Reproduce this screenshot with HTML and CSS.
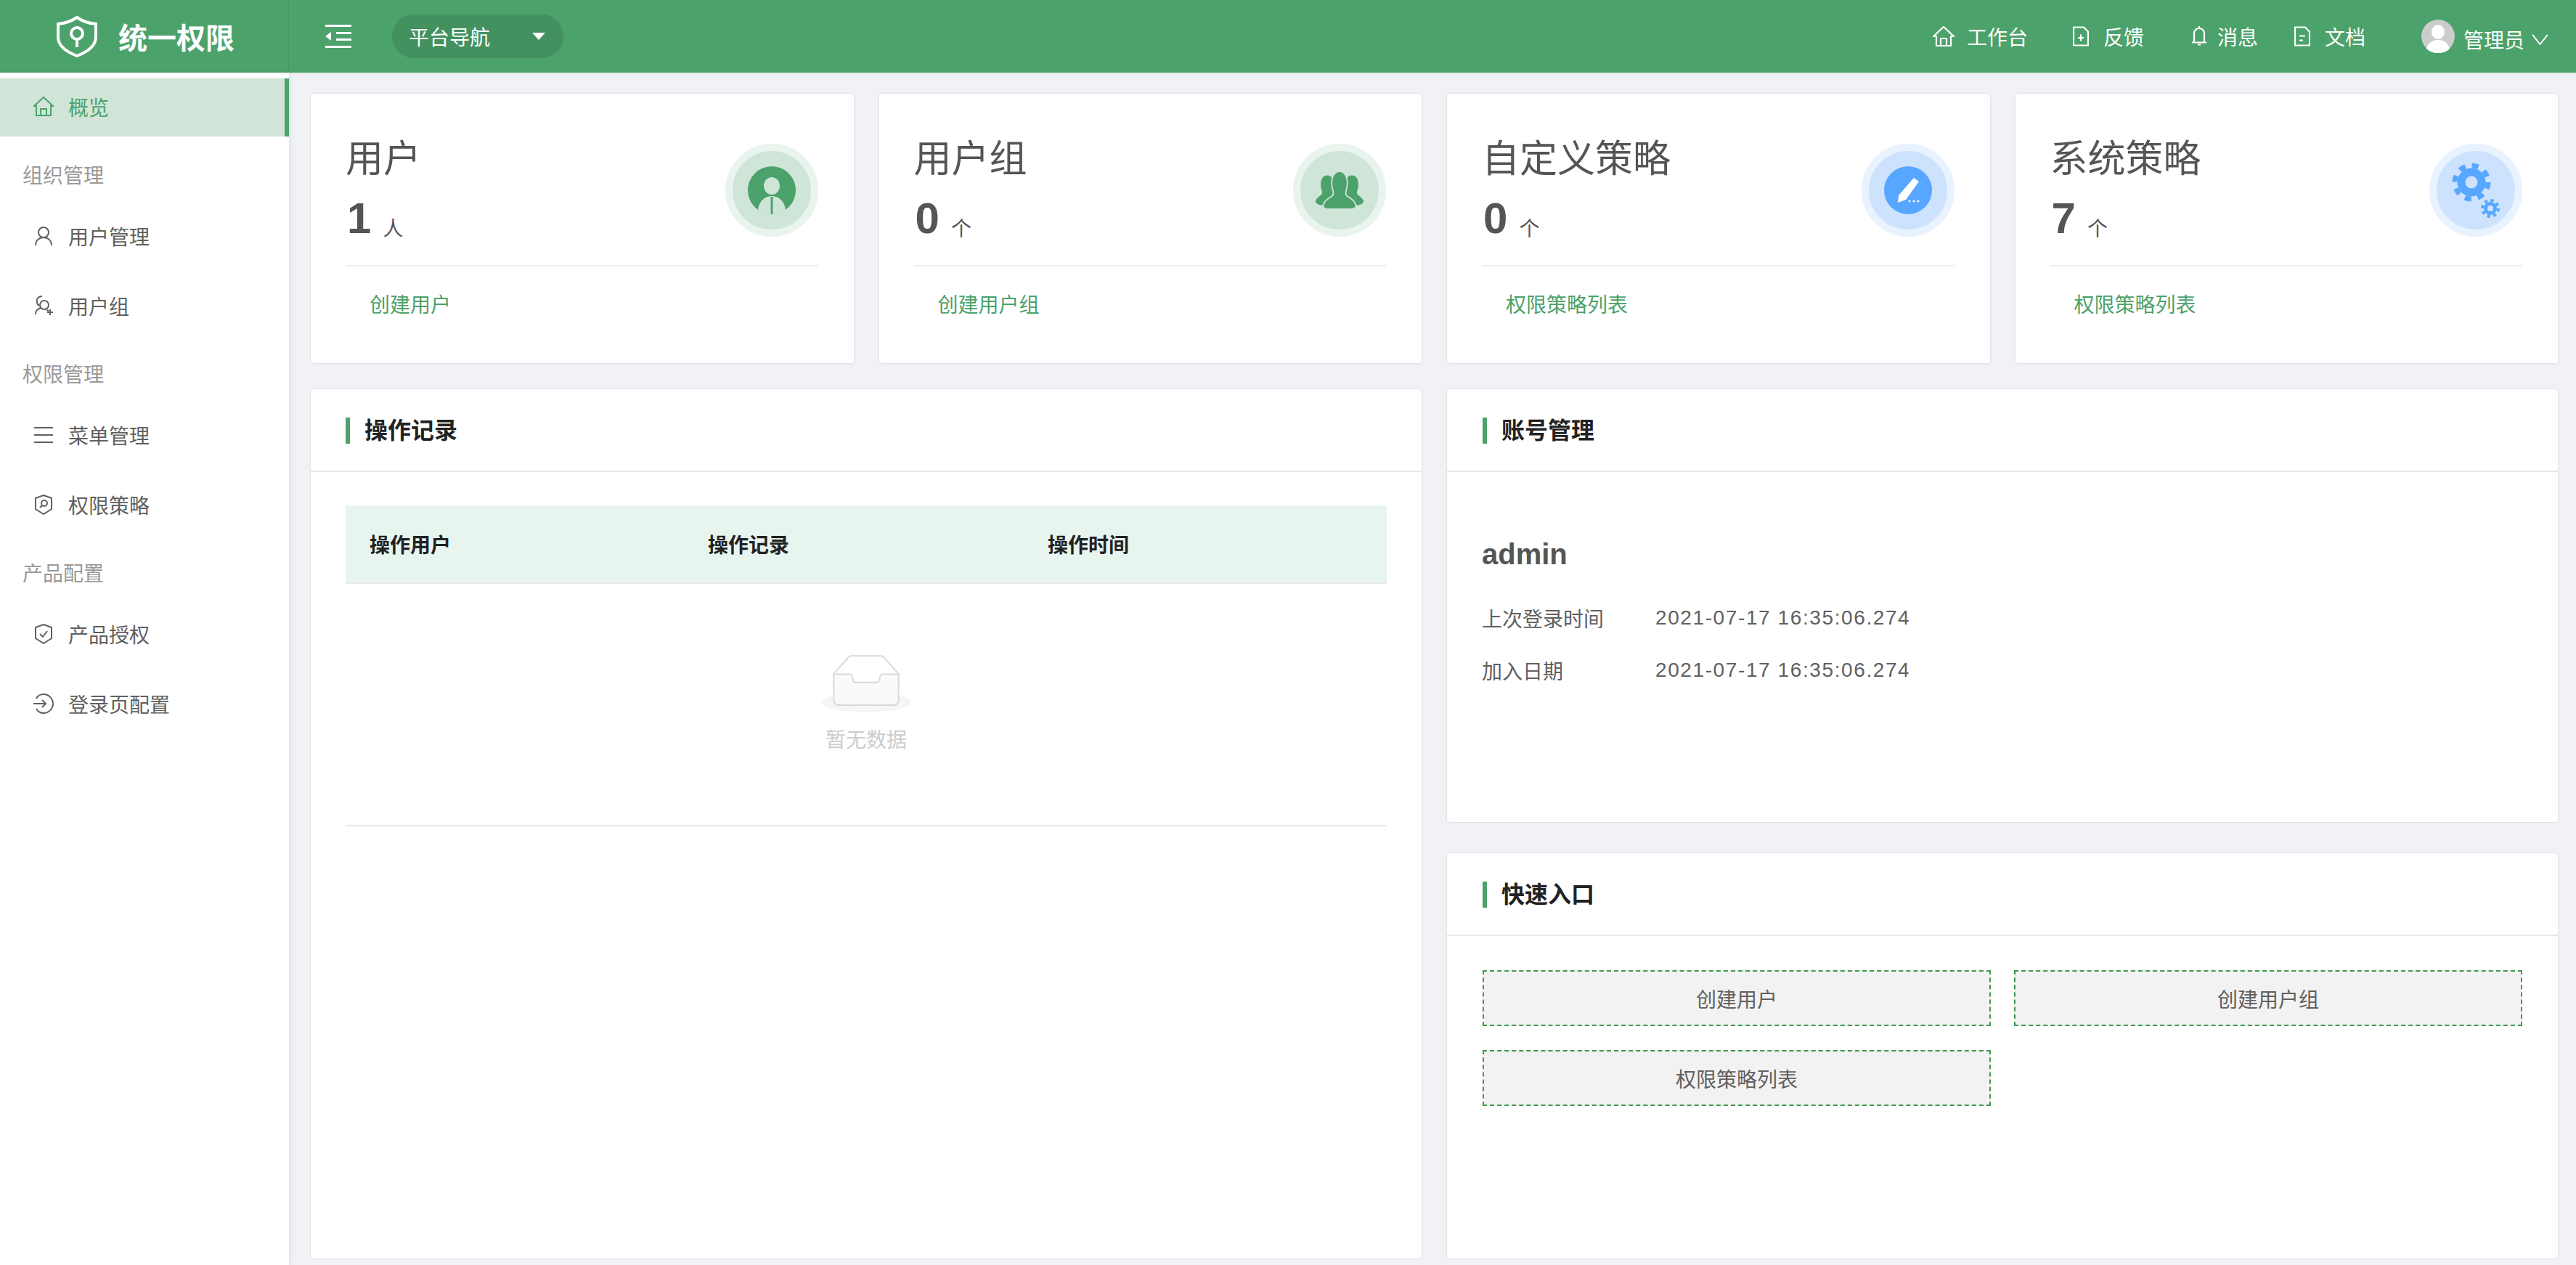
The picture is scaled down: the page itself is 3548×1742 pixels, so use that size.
FILE: index.html
```html
<!DOCTYPE html>
<html lang="zh-CN">
<head>
    <meta charset="UTF-8">
    <title>统一权限</title>
    <link rel="stylesheet" href="styles.css">
</head>
<body>

    <header class="topbar">
        <div class="brand">
            <svg class="brand-icon" viewBox="0 0 56 58" fill="none" stroke="#fff" stroke-width="4">
                <path d="M28 3C35 8 44 11 54 12V30C54 43 41 51 28 56C15 51 2 43 2 30V12C12 11 21 8 28 3Z"/>
                <circle cx="28" cy="25" r="8"/>
                <path d="M28 33V44"/>
            </svg>
            <span class="brand-name">统一权限</span>
        </div>
        <svg class="collapse-icon" viewBox="0 0 36 32" fill="#fff">
            <rect x="0" y="0" width="36" height="3"/>
            <rect x="15" y="10" width="21" height="3"/>
            <rect x="15" y="19" width="21" height="3"/>
            <rect x="0" y="29" width="36" height="3"/>
            <path d="M8 10V22L0 16Z"/>
        </svg>
        <div class="platform">
            <span>平台导航</span>
            <i class="caret"></i>
        </div>
        <nav class="top-links">
            <a class="top-link link-home">
                <svg class="home-icon" viewBox="0 0 30 28" fill="none" stroke="#fff" stroke-width="2.2"><path d="M1 14L15 1L29 14H25V27H5V14Z"/><path d="M11 27V17H19V27"/></svg>
                工作台
            </a>
            <a class="top-link link-feedback">
                <svg class="doc-icon" viewBox="0 0 22 27" fill="none" stroke="#fff" stroke-width="2.2"><path d="M1 1H15L21 7V26H1Z"/><path d="M11 11V20M7 15.500H15"/></svg>
                反馈
            </a>
            <a class="top-link link-message">
                <svg class="doc-icon" viewBox="0 0 22 28" fill="none" stroke="#fff" stroke-width="2.2"><path d="M4 22V10C4 6 7 3 11 3C15 3 18 6 18 10V22M1 22.500H21M9 25.500H13M11 0V3"/></svg>
                消息
            </a>
            <a class="top-link link-doc">
                <svg class="doc-icon" viewBox="0 0 22 27" fill="none" stroke="#fff" stroke-width="2.2"><path d="M1 1H15L21 7V26H1Z"/><path d="M7 13H15M7 19H12"/></svg>
                文档
            </a>
            <a class="top-user">
                <svg class="avatar" viewBox="0 0 46 46">
                    <circle cx="23" cy="23" r="23" fill="#ccc"/>
                    <ellipse cx="23" cy="17" rx="9" ry="10" fill="#fff"/>
                    <path d="M7 40C9 32 15 28 23 28C31 28 37 32 39 40C35 44 29 46 23 46C17 46 11 44 7 40Z" fill="#fff"/>
                </svg>
                <span>管理员</span>
                <svg class="chevron" viewBox="0 0 24 16" fill="none" stroke="#fff" stroke-width="2"><path d="M1 1L12 15L23 1"/></svg>
            </a>
        </nav>
    </header>

    <div class="layout">
        <aside class="sidebar">
            <a class="menu-item active">
                <svg class="menu-icon" viewBox="0 0 28 28" fill="none" stroke="currentColor" stroke-width="2"><path d="M1 13L14 1L27 13H24V26H4V13Z"/><path d="M10 26V17H18V26"/></svg>
                概览
            </a>
            <div class="menu-group">组织管理</div>
            <a class="menu-item">
                <svg class="menu-icon" viewBox="0 0 28 28" fill="none" stroke="currentColor" stroke-width="2"><circle cx="14" cy="9" r="7"/><path d="M3 27C3 20 8 16 14 16C20 16 25 20 25 27"/></svg>
                用户管理
            </a>
            <a class="menu-item">
                <svg class="menu-icon" viewBox="0 0 28 28" fill="none" stroke="currentColor" stroke-width="2"><circle cx="15" cy="13" r="6"/><path d="M3 26C3 21 5 19 10 17M12 1C7 1 4 4 5 9C5 11 6 13 8 14M18 20L21 21M23 19V27M19 23H27"/></svg>
                用户组
            </a>
            <div class="menu-group">权限管理</div>
            <a class="menu-item">
                <svg class="menu-icon" viewBox="0 0 28 28" fill="currentColor"><rect x="1" y="3" width="26" height="2"/><rect x="1" y="13" width="26" height="2"/><rect x="1" y="23" width="26" height="2"/></svg>
                菜单管理
            </a>
            <a class="menu-item">
                <svg class="menu-icon" viewBox="0 0 28 28" fill="none" stroke="currentColor" stroke-width="2"><path d="M14 1L25 5V20L14 27L3 20V5Z"/><circle cx="15" cy="12" r="4"/><path d="M12 15L9 18"/></svg>
                权限策略
            </a>
            <div class="menu-group">产品配置</div>
            <a class="menu-item">
                <svg class="menu-icon" viewBox="0 0 28 28" fill="none" stroke="currentColor" stroke-width="2"><path d="M14 1L25 5V20L14 27L3 20V5Z"/><path d="M9 14L13 18L19 10"/></svg>
                产品授权
            </a>
            <a class="menu-item">
                <svg class="menu-icon" viewBox="0 0 28 28" fill="none" stroke="currentColor" stroke-width="2"><path d="M4 7C6 3 10 1 14 1C21 1 27 7 27 14C27 21 21 27 14 27C10 27 6 25 4 21"/><path d="M0 14H17M12 9L17 14L12 19"/></svg>
                登录页配置
            </a>
        </aside>

        <main class="content">
            <section class="stats">
                <div class="card stat">
                    <div class="stat-top">
                        <div>
                            <div class="stat-title">用户</div>
                            <div class="stat-num"><b>1</b><span>人</span></div>
                        </div>
                        <div class="badge badge-green">
                            <svg class="badge-icon" viewBox="0 0 66 66">
                                <circle cx="33" cy="33" r="33" fill="#4ca26b"/>
                                <ellipse cx="33" cy="27" rx="11" ry="12" fill="#cfe5d7"/>
                                <path d="M14 60C15 50 22 41 33 41C44 41 51 50 52 60C47 64 40 66 33 66C26 66 19 64 14 60Z" fill="#cfe5d7"/>
                                <path d="M31.500 42H34.500V66H31.500Z" fill="#4ca26b"/>
                            </svg>
                        </div>
                    </div>
                    <a class="stat-link">创建用户</a>
                </div>
                <div class="card stat">
                    <div class="stat-top">
                        <div>
                            <div class="stat-title">用户组</div>
                            <div class="stat-num"><b>0</b><span>个</span></div>
                        </div>
                        <div class="badge badge-green">
                            <svg class="badge-icon" viewBox="0 0 74 58" fill="#4ca26b">
                                <path d="M18 6C26 6 28 14 28 22C28 30 26 32 27 38L10 52C6 52 0 50 0 46C1 40 8 38 10 34C11 31 8 28 8 20C8 12 11 6 18 6Z"/>
                                <path d="M56 6C48 6 46 14 46 22C46 30 48 32 47 38L64 52C68 52 74 50 74 46C73 40 66 38 64 34C63 31 66 28 66 20C66 12 63 6 56 6Z"/>
                                <path d="M37 0C45 0 49 8 49 18C49 28 45 32 47 36C50 41 60 42 62 52C63 56 60 58 56 58H18C14 58 11 56 12 52C14 42 24 41 27 36C29 32 25 28 25 18C25 8 29 0 37 0Z" stroke="#cfe5d7" stroke-width="2"/>
                            </svg>
                        </div>
                    </div>
                    <a class="stat-link">创建用户组</a>
                </div>
                <div class="card stat">
                    <div class="stat-top">
                        <div>
                            <div class="stat-title">自定义策略</div>
                            <div class="stat-num"><b>0</b><span>个</span></div>
                        </div>
                        <div class="badge badge-blue">
                            <svg class="badge-icon" viewBox="0 0 66 66">
                                <circle cx="33" cy="33" r="33" fill="#57a6ff"/>
                                <path d="M41 16L48 21L30 46L19 50L20 40Z" fill="#fff"/>
                                <circle cx="35" cy="48" r="1.500" fill="#fff"/>
                                <circle cx="41" cy="48" r="1.500" fill="#fff"/>
                                <circle cx="47" cy="48" r="1.500" fill="#fff"/>
                            </svg>
                        </div>
                    </div>
                    <a class="stat-link">权限策略列表</a>
                </div>
                <div class="card stat">
                    <div class="stat-top">
                        <div>
                            <div class="stat-title">系统策略</div>
                            <div class="stat-num"><b>7</b><span>个</span></div>
                        </div>
                        <div class="badge badge-blue">
                            <svg class="badge-gears" viewBox="0 0 108 108" fill="none" stroke="#57a6ff">
                                <circle cx="48" cy="43" r="23" stroke-width="7" stroke-dasharray="9 9.060"/>
                                <circle cx="48" cy="43" r="14" stroke-width="11"/>
                                <circle cx="74" cy="79" r="11" stroke-width="4" stroke-dasharray="4.300 4.340"/>
                                <circle cx="74" cy="79" r="6.500" stroke-width="5"/>
                            </svg>
                        </div>
                    </div>
                    <a class="stat-link">权限策略列表</a>
                </div>
            </section>

            <section class="panels">
                <div class="card panel">
                    <h2 class="panel-title"><span>操作记录</span></h2>
                    <div class="log-body">
                        <div class="log-head">
                            <div>操作用户</div>
                            <div>操作记录</div>
                            <div>操作时间</div>
                        </div>
                        <div class="log-empty">
                            <svg class="empty-icon" viewBox="0 0 64 41">
                                <g transform="translate(0 1)" fill="none" fill-rule="evenodd">
                                    <ellipse fill="#f5f5f5" cx="32" cy="33" rx="32" ry="7"/>
                                    <g fill-rule="nonzero" stroke="#d9d9d9">
                                        <path d="M55 12.760L44.854 1.258C44.367.474 43.656 0 42.907 0H21.093c-.749 0-1.460.474-1.947 1.257L9 12.761V22h46v-9.240z"/>
                                        <path d="M41.613 15.931c0-1.605.994-2.930 2.227-2.931H55v18.137C55 33.260 53.680 35 52.050 35h-40.100C10.320 35 9 33.259 9 31.137V13h11.160c1.233 0 2.227 1.323 2.227 2.928v.022c0 1.605 1.005 2.901 2.237 2.901h14.752c1.232 0 2.237-1.308 2.237-2.913v-.007z" fill="#fafafa"/>
                                    </g>
                                </g>
                            </svg>
                            <div class="empty-text">暂无数据</div>
                        </div>
                    </div>
                </div>

                <div class="side-panels">
                    <div class="card panel account">
                        <h2 class="panel-title"><span>账号管理</span></h2>
                        <div class="account-body">
                            <div class="account-name">admin</div>
                            <div class="account-row"><label>上次登录时间</label><span>2021-07-17 16:35:06.274</span></div>
                            <div class="account-row"><label>加入日期</label><span>2021-07-17 16:35:06.274</span></div>
                        </div>
                    </div>
                    <div class="card panel quick">
                        <h2 class="panel-title"><span>快速入口</span></h2>
                        <div class="quick-grid">
                            <a class="quick-btn">创建用户</a>
                            <a class="quick-btn">创建用户组</a>
                            <a class="quick-btn">权限策略列表</a>
                        </div>
                    </div>
                </div>
            </section>
        </main>
    </div>

</body>
</html>
```

FILE: styles.css
```css
* {
    box-sizing: border-box;
}

body {
    margin: 0;
    height: 1742px;
    overflow: hidden;
    font-family: "Liberation Sans", "Noto Sans CJK SC", sans-serif;
    font-size: 28px;
    color: #606060;
    background-color: #f0f2f5;
}

/* top bar */
.topbar {
    display: flex;
    align-items: center;
    height: 100px;
    background-color: #4ca26b;
    color: #fff;
}

.brand {
    display: flex;
    align-items: center;
    width: 398px;
    height: 100%;
    padding-left: 78px;
    border-right: 1px solid #479a65;
    flex-shrink: 0;
}

.brand-icon {
    width: 56px;
    height: 58px;
}

.brand-name {
    margin-left: 29px;
    font-size: 40px;
    font-weight: 700;
}

.collapse-icon {
    width: 36px;
    height: 32px;
    margin-left: 50px;
}

.platform {
    display: flex;
    align-items: center;
    justify-content: space-between;
    width: 236px;
    height: 60px;
    margin-left: 56px;
    padding: 0 25px 0 23px;
    border-radius: 30px;
    background-color: #43915f;
}

.caret {
    width: 0;
    height: 0;
    border-left: 9px solid transparent;
    border-right: 9px solid transparent;
    border-top: 10px solid #fff;
}

.top-links {
    display: flex;
    align-items: center;
    margin-left: auto;
    margin-right: 38px;
}

.top-link {
    display: flex;
    align-items: center;
}

.home-icon {
    width: 30px;
    height: 28px;
    margin-right: 17px;
}

.doc-icon {
    width: 22px;
    height: 28px;
    margin-right: 20px;
}

.link-feedback {
    margin-left: 62px;
}

.link-message {
    margin-left: 65px;
}

.link-message .doc-icon {
    margin-right: 14px;
}

.link-doc {
    margin-left: 50px;
}

.top-user {
    display: flex;
    align-items: center;
    margin-left: 77px;
}

.top-user span {
    margin-top: 8px;
    margin-left: 12px;
}

.avatar {
    width: 46px;
    height: 46px;
}

.chevron {
    width: 23px;
    height: 15px;
    margin-left: 10px;
    margin-top: 8px;
}

/* page body */
.layout {
    display: flex;
    height: 1642px;
}

.sidebar {
    width: 398px;
    flex-shrink: 0;
    padding-top: 8px;
    background-color: #fff;
    box-shadow: 2px 0 6px rgba(0, 21, 41, 0.08);
}

.menu-item {
    display: flex;
    align-items: center;
    height: 80px;
    margin-bottom: 16px;
    padding-bottom: 2px;
    padding-left: 46px;
    color: #606060;
}

.menu-item.active {
    margin-bottom: 0;
    color: #4ca26b;
    background-color: #d1e4d8;
    border-right: 6px solid #4ca26b;
}

.menu-icon {
    width: 28px;
    height: 28px;
    margin-right: 20px;
}

.menu-group {
    height: 60px;
    margin-top: 24px;
    margin-bottom: 14px;
    padding-left: 31px;
    line-height: 62px;
    color: #999;
}

.content {
    flex: 1;
    padding: 29px 25px 0 30px;
    box-shadow: inset 0 6px 6px -6px rgba(0, 21, 41, 0.08);
}

.card {
    border-radius: 4px;
    background-color: #fff;
    box-shadow: 0 0 3px rgba(0, 0, 0, 0.15);
}

/* stat cards */
.stats {
    display: grid;
    grid-template-columns: repeat(4, 1fr);
    column-gap: 35px;
}

.stat {
    height: 371px;
    padding: 0 49px 0 48px;
}

.stat-top {
    display: flex;
    justify-content: space-between;
    height: 238px;
    padding-top: 58px;
    border-bottom: 2px solid #eee;
}

.stat-title {
    font-size: 52px;
    line-height: 64px;
    color: #555;
}

.stat-num {
    margin-top: 18px;
    padding-left: 2px;
    line-height: 64px;
    color: #555;
}

.stat-num b {
    font-size: 60px;
}

.stat-num span {
    margin-left: 16px;
    font-size: 28px;
    vertical-align: -4px;
}

.badge {
    display: flex;
    align-items: center;
    justify-content: center;
    width: 128px;
    height: 128px;
    margin-top: 11px;
    border-style: solid;
    border-width: 10px;
    border-radius: 50%;
}

.badge-green {
    background-color: #cfe5d7;
    border-color: #eaf4ee;
}

.badge-blue {
    background-color: #cde3fd;
    border-color: #e8f3ff;
}

.badge-icon {
    width: 66px;
    height: 66px;
}

.badge-gears {
    width: 108px;
    height: 108px;
}

.stat-link {
    display: block;
    padding: 34px 0 0 33px;
    line-height: 40px;
    color: #4ca26b;
}

/* panels */
.panels {
    display: grid;
    grid-template-columns: 1fr 1fr;
    column-gap: 35px;
    margin-top: 36px;
}

.panel-title {
    display: flex;
    align-items: center;
    height: 114px;
    margin: 0;
    padding-top: 2px;
    padding-left: 48px;
    border-bottom: 2px solid #e8e8e8;
    font-size: 32px;
    font-weight: 700;
    color: #222;
}

.panel-title span {
    padding-left: 20px;
    line-height: 36px;
    border-left: 6px solid #4ca26b;
}

.side-panels .panel-title {
    padding-left: 49px;
}

.panel {
    height: 1197px;
}

.log-body {
    padding: 46px 48px 0;
}

.log-head {
    display: grid;
    grid-template-columns: 466px 468px 1fr;
    align-items: center;
    height: 108px;
    padding-left: 33px;
    border-bottom: 2px solid #e8e8e8;
    font-weight: 700;
    color: #222;
    background-color: #e8f5ef;
}

.log-empty {
    display: flex;
    flex-direction: column;
    align-items: center;
    height: 334px;
    padding-top: 97px;
    border-bottom: 2px solid #e8e8e8;
}

.empty-icon {
    width: 124px;
    height: 80px;
}

.empty-text {
    margin-top: 16px;
    color: #ccc;
}

.side-panels {
    display: flex;
    flex-direction: column;
    gap: 43px;
}

.account {
    height: 596px;
}

.account-body {
    padding: 83px 48px 0;
}

.account-name {
    font-size: 40px;
    font-weight: 700;
    line-height: 60px;
    color: #555;
}

.account-row {
    display: flex;
    align-items: center;
    height: 72px;
}

.account-name + .account-row {
    margin-top: 22px;
}

.account-row label {
    width: 239px;
}

.account-row span {
    letter-spacing: 1.6px;
}

.quick {
    height: 558px;
}

.quick-grid {
    display: grid;
    grid-template-columns: 700px 700px;
    grid-auto-rows: 77px;
    gap: 33px 32px;
    padding: 47px 0 0 49px;
}

.quick-btn {
    display: flex;
    align-items: center;
    justify-content: center;
    border: 2px dashed #3f9a4f;
    background-color: #f2f2f2;
}
```
